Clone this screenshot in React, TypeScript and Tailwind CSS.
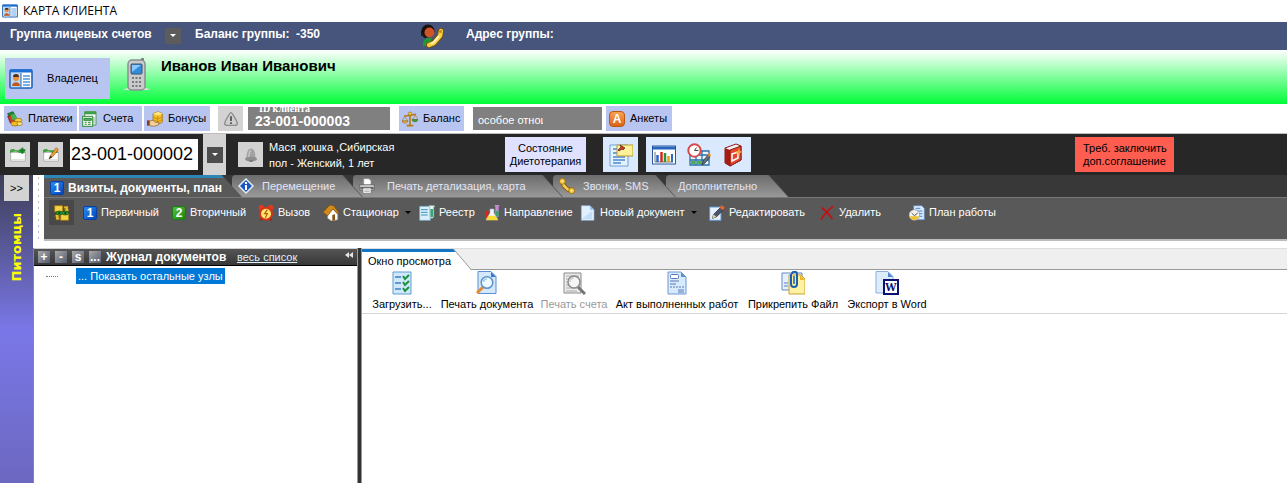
import type { ReactNode } from "react";

function Svg({ size = 16, label, children }: { size?: number; label?: string; children: ReactNode }) {
  return (
    <svg width={size} height={size} viewBox="0 0 24 24" className="shrink-0" aria-hidden={label ? undefined : true} role={label ? "img" : undefined} aria-label={label}>
      {children}
    </svg>
  );
}

const CardIcon = ({ size }: { size?: number }) => (
  <Svg size={size}>
    <rect x="1" y="3" width="22" height="18" rx="1" fill="#fff" stroke="#1f63b8" strokeWidth="1.6" />
    <rect x="1" y="2.500" width="22" height="3" fill="#1a6fd6" />
    <rect x="2" y="6" width="10" height="14" fill="#b9d7f6" />
    <circle cx="7" cy="11" r="3" fill="#e8913a" />
    <path d="M4 10a3 3 0 0 1 6 0z" fill="#5a2b10" />
    <path d="M3 19c0-5 8-5 8 0z" fill="#c4561d" />
    <path d="M12 6v14" stroke="#1f63b8" />
    <path d="M14 9h7M14 12h7M14 15h7M14 18h7" stroke="#4f94dc" strokeWidth="1.300" />
  </Svg>
);

const PhoneIcon = () => (
  <svg width="27" height="34" viewBox="0 0 27 34" className="shrink-0" aria-hidden="true">
    <path d="M0 32h27l-3-2H4z" fill="#d6dcd6" />
    <rect x="18" y="0" width="3" height="8" rx="1" fill="#777" />
    <rect x="5" y="2" width="17" height="30" rx="4" fill="#c9cbcc" stroke="#8b8f90" strokeWidth="1.500" />
    <rect x="8" y="6" width="11" height="10" rx="1" fill="#2f8de0" stroke="#3c5168" />
    <path d="M9 7h9l-9 7z" fill="#8cc8fa" />
    {[20, 24, 28].map((y) => [10, 13.5, 17].map((x) => <rect key={`${x}-${y}`} x={x - 1} y={y - 1} width="2" height="2" fill="#75797b" />))}
  </svg>
);

const OperatorIcon = () => (
  <Svg size={24}>
    <path d="M3 22c-1-7 4-9 9-8l-3 8z" fill="#20983a" />
    <circle cx="8" cy="7" r="6.500" fill="#16100e" />
    <circle cx="9.500" cy="8.500" r="5" fill="#cf5426" />
    <path d="M2 7v5M3 12l3 2" stroke="#111" strokeWidth="1.500" />
    <path d="M9 21l5-2 6-7 1-5" fill="none" stroke="#7b5200" strokeWidth="6" strokeLinecap="round" strokeLinejoin="round" />
    <path d="M9 21l5-2 6-7 1-5" fill="none" stroke="#f7cf4a" strokeWidth="4.200" strokeLinecap="round" strokeLinejoin="round" />
    <path d="M11 20l3-2 5-6" fill="none" stroke="#fff1b0" strokeWidth="2" />
    <circle cx="20.500" cy="7.500" r="1.500" fill="#c08a14" />
  </Svg>
);

const PayIcon = () => (
  <Svg>
    <path d="M1 4l8-3 5 9-8 4z" fill="#1c8a2b" stroke="#0c4d15" />
    <path d="M1 8l4 10 7-2-4-10z" fill="#c43b23" stroke="#6e1608" />
    <path d="M5 6l7-2 3 7-7 3z" fill="#49b04f" />
    <ellipse cx="17" cy="14" rx="5.500" ry="3" fill="#f7cf3d" stroke="#94660a" />
    <ellipse cx="12" cy="19" rx="6" ry="3.500" fill="#f3bb25" stroke="#94660a" />
    <ellipse cx="19" cy="19" rx="4" ry="2.800" fill="#ffe27a" stroke="#94660a" />
  </Svg>
);

const BillIcon = () => (
  <Svg>
    <path d="M4 1h17v20H4z" fill="#fff" stroke="#4d9a52" strokeWidth="1.500" />
    <path d="M4 1h17v4H4z" fill="#3f9f48" />
    <rect x="1" y="8" width="15" height="15" fill="#eef8ee" stroke="#338a3d" strokeWidth="1.500" />
    <path d="M3 11h11v3H3zM4 17h3M9 17h4M4 20h3M9 20h4" fill="#58b15f" stroke="#338a3d" strokeWidth="1.500" />
    <path d="M18 9v10" stroke="#81a985" strokeWidth="1.500" />
  </Svg>
);

const BonusIcon = () => (
  <Svg>
    <path d="M9 4l8-3 6 3v13l-7 3-7-3z" fill="#f6bd22" stroke="#98690c" />
    <path d="M9 4l7 3 7-3-6-3z" fill="#ffe783" />
    <path d="M16 7v13M9 9l7 3 7-3M9 13l7 3 7-3" stroke="#b77e0e" fill="none" />
    <path d="M0 14h4v8H0z" fill="#8b3d16" />
    <path d="M4 15l5-1 3 3h6l-1 4-7 2-6-1z" fill="#f2d3a2" stroke="#8a5a2a" />
  </Svg>
);

const WarnIcon = () => (
  <Svg>
    <path d="M12 2.500c2 0 9 13 9.500 16 0 2-1 3-3 3h-13c-2 0-3-1-3-3C3 15.500 10 2.500 12 2.500z" fill="#cfcfcf" stroke="#8b8b8b" strokeWidth="2" />
    <path d="M12 8v7M12 17v2.500" stroke="#4f4f4f" strokeWidth="2.600" />
  </Svg>
);

const ScalesIcon = () => (
  <Svg>
    <path d="M12 2v19M7 22h10M3 8l18-3" stroke="#b57b12" strokeWidth="2.400" />
    <circle cx="12" cy="4" r="2.500" fill="#f7cd48" stroke="#99680b" />
    <path d="M4 8l-4 7h9zM20 6l-4 7h8z" fill="none" stroke="#a9801f" />
    <path d="M0 15h9c-1 4-8 4-9 0z" fill="#f2c136" stroke="#99680b" />
    <path d="M15 13h9c-1 4-8 4-9 0z" fill="#4da63c" stroke="#2d6c22" />
  </Svg>
);

const LetterIcon = () => (
  <span aria-hidden="true" className="grid size-4 shrink-0 place-items-center rounded-sm border border-[#b85a14] bg-linear-to-b from-[#f9a052] to-[#dd6210] text-xs leading-3 font-bold text-white">A</span>
);

const FolderIcon = ({ edit = false }: { edit?: boolean }) => (
  <Svg>
    <path d="M1 8h22v13H1z" fill="#fff" stroke="#999" />
    <path d="M0 9V5c3-3 6-2 8 0h14v4H14c-4-3-8-3-14 0z" fill="#3ea33f" />
    <path d="M2 18h20v3H2z" fill="#e1e6dc" />
    {edit ? (
      <>
        <path d="M9 18l2-5L20 1l3 3-9 11z" fill="#f0a236" stroke="#9b4b12" />
        <path d="M9 18l2-5 3 2z" fill="#333" />
      </>
    ) : (
      <path d="M14 5h9M18.500 1v9" stroke="#177f25" strokeWidth="3" />
    )}
  </Svg>
);

const BellIcon = () => (
  <Svg>
    <path d="M5 17c1-3 0-7 2-11 2-5 8-5 10 0 2 4 1 8 2 11z" fill="#a2a2a2" />
    <path d="M9 15c0-5 0-9 3-10" stroke="#ccc" strokeWidth="2" fill="none" />
    <ellipse cx="12" cy="18" rx="9" ry="3.500" fill="#8e8e8e" />
    <ellipse cx="12" cy="21" rx="3" ry="1.500" fill="#777" />
  </Svg>
);

const NoteIcon = () => (
  <Svg size={24}>
    <path d="M1 2h18v21H1z" fill="#e6f3ff" stroke="#6ba0d6" />
    <path d="M4 6h5M4 10h6M4 14h12M4 17h12M4 20h8" stroke="#4789cf" strokeWidth="1.300" />
    <path d="M8 2h16v11H8z" fill="#fff19a" stroke="#b79a2e" />
    <path d="M9 7l3-3-1-2 5 3-2 2-1-1-3 2z" fill="#d2342a" stroke="#3a1010" strokeWidth=".6" />
  </Svg>
);

const ChartIcon = () => (
  <Svg size={24}>
    <rect x="0.500" y="3" width="23" height="18" fill="#fff" stroke="#2a58a0" />
    <path d="M1 3.500h22v3H1z" fill="#2865bd" />
    <path d="M3 9v10h18" stroke="#777" fill="none" />
    <path d="M5.500 19v-7" stroke="#2c68c8" strokeWidth="2.500" />
    <path d="M9.500 19V9" stroke="#cf2c20" strokeWidth="2.500" />
    <path d="M13 19v-9" stroke="#2d9436" strokeWidth="2.500" />
    <path d="M16.500 19v-6" stroke="#e5a021" strokeWidth="2.500" />
    <path d="M20 19v-8" stroke="#2c68c8" strokeWidth="2" />
  </Svg>
);

const ScheduleIcon = () => (
  <Svg size={24}>
    <path d="M3 8h19v14H3z" fill="#eaf5ff" stroke="#2a6fa8" strokeWidth="1.300" />
    <path d="M3 12h19M3 17h19M9 8v14M15 8v14" stroke="#2a6fa8" strokeWidth="1.300" />
    <path d="M4 18h4v3H4zM10 18h4v3h-4z" fill="#4caf4f" />
    <circle cx="7.500" cy="7.500" r="6.200" fill="#fff" stroke="#d9484b" strokeWidth="2" />
    <path d="M7.500 7.500h4M7.500 7.500l2-3" stroke="#444" fill="none" />
    <path d="M15 22l1-4 5-6 2 2-5 6z" fill="#687180" stroke="#333" strokeWidth=".8" />
    <path d="M20 12l2-2 2 2-1 2z" fill="#e48a28" />
  </Svg>
);

const BookIcon = () => (
  <Svg size={24}>
    <path d="M3 5l11-4 5 2v14L8 23l-5-3z" fill="#f3f3f3" stroke="#8d1b13" />
    <path d="M3 5l5 2v16l-5-3z" fill="#a51d12" />
    <path d="M8 7l11-4v14L8 23z" fill="#e4482f" stroke="#8d1b13" />
    <path d="M10 11l6-2v6l-6 3z" fill="none" stroke="#fff" strokeWidth="1.500" />
    <path d="M17 5l1 3 3 1-3 1-1 4-1-4-3-1 3-1z" fill="#f3a437" />
  </Svg>
);

function NumberIcon({ n, green = false }: { n: number; green?: boolean }) {
  return (
    <span aria-hidden="true" className={`grid size-[14px] shrink-0 place-items-center rounded-xs border text-xs leading-3 font-bold text-white ${green ? "border-[#1b7a1b] bg-linear-to-br from-[#55c13b] to-[#16840f]" : "border-[#0b3fa4] bg-linear-to-br from-[#2a8df2] to-[#0646bb]"}`}>
      {n}
    </span>
  );
}

const InfoIcon = () => (
  <Svg>
    <path d="M12 0l12 12-12 12L0 12z" fill="#e5eefb" />
    <path d="M12 3l9 9-9 9-9-9z" fill="#1c56c4" />
    <path d="M12 6v3M12 10.500V18" stroke="#fff" strokeWidth="3" />
  </Svg>
);

const PrinterIcon = () => (
  <Svg>
    <path d="M7 1h8l3 3v7H7z" fill="#fff" stroke="#8b8b8b" />
    <path d="M1 10h22v8H1z" fill="#c9c9c9" stroke="#555" />
    <path d="M2 14h20v2H2z" fill="#444" />
    <path d="M6 15h12v8H6z" fill="#fff" stroke="#777" />
    <path d="M8 18h8M8 20.500h8" stroke="#888" />
  </Svg>
);

const HandsetIcon = () => (
  <Svg>
    <path d="M5 5l2 6 6 6 6 2" fill="none" stroke="#8a5a04" strokeWidth="6.500" />
    <path d="M5 5l2 6 6 6 6 2" fill="none" stroke="#f8cf55" strokeWidth="4" />
    <circle cx="5" cy="5" r="4.500" fill="#f6c13d" stroke="#8a5a04" />
    <circle cx="19" cy="19" r="4.500" fill="#f6c13d" stroke="#8a5a04" />
    <circle cx="5" cy="5" r="1.500" fill="#fff4be" />
    <circle cx="19" cy="19" r="1.500" fill="#fff4be" />
  </Svg>
);

const LinkIcon = () => (
  <Svg>
    <path d="M1 1h12v9H1zM10 13h12v10H10z" fill="#f5d243" stroke="#a1770c" />
    <path d="M15 2h6v5h2l-4 4-4-4h2V5h-2zM8 22H3v-5H1l4-4 4 4H7v2h1z" fill="#f0c22f" stroke="#a1770c" strokeWidth=".7" />
    <ellipse cx="8" cy="12" rx="5" ry="3" fill="#2d9a2c" stroke="#0d4f13" />
    <ellipse cx="17" cy="12" rx="5" ry="3" fill="#2d9a2c" stroke="#0d4f13" />
    <circle cx="8" cy="12" r="1.500" fill="#082f0a" />
    <circle cx="17" cy="12" r="1.500" fill="#082f0a" />
  </Svg>
);

const AlarmIcon = () => (
  <Svg>
    <circle cx="5" cy="4" r="4" fill="#e23a1e" />
    <circle cx="19" cy="4" r="4" fill="#e23a1e" />
    <path d="M4 23l3-4M20 23l-3-4" stroke="#a31c0c" strokeWidth="3" />
    <circle cx="12" cy="13" r="9" fill="#ffe36b" stroke="#d5321a" strokeWidth="3" />
    <path d="M14 7l-4 6h4l-3 6" stroke="#b0600a" strokeWidth="1.800" fill="none" />
  </Svg>
);

const HouseIcon = () => (
  <Svg>
    <path d="M7 13l8-7 7 8v8l-9 2-6-4z" fill="#fff" stroke="#a39b8b" />
    <path d="M0 11L10 0l6 1 8 11-2 1-7-7-8 10z" fill="#d18a1b" stroke="#7b4a08" />
    <path d="M14 15l4-1v9l-4 1z" fill="#8a5110" />
  </Svg>
);

const RegistryIcon = () => (
  <Svg>
    <path d="M1 2h16v21H1z" fill="#d9f0fb" stroke="#70b1d6" />
    <path d="M3 7h10M3 11h10M3 15h10" stroke="#3f8fc2" strokeWidth="1.500" />
    <path d="M15 1h8v2h-1v14c0 4-6 4-6 0V3h-1z" fill="#e9f8f0" stroke="#9bb" />
    <path d="M17 6h4v11c0 2-4 2-4 0z" fill="#35a576" />
  </Svg>
);

const FlaskIcon = () => (
  <Svg>
    <path d="M1 9h6v9c0 4-5 4-5 0z" fill="#d22a1c" />
    <path d="M16 0h7v2h-1v14c0 3-5 3-5 0V2h-1z" fill="#c48bd1" />
    <path d="M18 9h4v7c0 2-4 2-4 0z" fill="#3aa06c" />
    <path d="M9 6h6v6l6 10H3l6-10z" fill="#f4f6fb" stroke="#9aa6bb" />
    <path d="M7 16h10l4 7H3z" fill="#f7dc34" />
  </Svg>
);

const PageIcon = () => (
  <Svg>
    <path d="M2 1h13l6 6v16H2z" fill="#e3f0ff" stroke="#8db5e2" />
    <path d="M15 1v6h6z" fill="#8cbdf0" />
    <path d="M4 20L18 9v12H4z" fill="#c4defa" />
  </Svg>
);

const EditIcon = () => (
  <Svg>
    <path d="M1 3h17v20H1z" fill="#e6f2ff" stroke="#5c93d1" strokeWidth="1.500" />
    <path d="M5 20l2-6L18 3l4 4-11 11z" fill="#4c566a" stroke="#1e2635" />
    <path d="M16 4l3-4 5 4-3 4z" fill="#e2632b" />
    <path d="M5 20l2-6 4 4z" fill="#f4cf94" />
  </Svg>
);

const DeleteIcon = () => (
  <Svg>
    <path d="M4 4c6 4 12 11 16 17M21 2C14 7 8 14 3 22" stroke="#c90d0d" strokeWidth="2.600" fill="none" />
  </Svg>
);

const PlanIcon = () => (
  <Svg>
    <path d="M7 1h12l4 4v17H7z" fill="#d9eaff" stroke="#5b8cc9" />
    <path d="M10 5h7M10 9h10M15 13h5M16 17h4" stroke="#4e86c9" strokeWidth="1.500" />
    <circle cx="8" cy="15" r="8" fill="#f2f2f2" stroke="#8e8e8e" />
    <path d="M1 17h14c-1 7-12 8-14 0z" fill="#f0c22c" />
    <path d="M4 12l4 4 5-4" stroke="#555" strokeWidth="1.500" fill="none" />
  </Svg>
);

const ChecklistIcon = () => (
  <Svg size={24}>
    <path d="M3 1h18v22H3z" fill="#cfe8fb" stroke="#5c9dd0" />
    <path d="M5 6h6M5 12h6M5 18h6" stroke="#3c7fc0" strokeWidth="1.300" />
    <path d="M13 5l2 3 4-4M13 11l2 3 4-4M13 17l2 3 4-4" stroke="#17913a" strokeWidth="2" fill="none" />
  </Svg>
);

function PreviewIcon({ gray = false }: { gray?: boolean }) {
  return gray ? (
    <Svg size={24}>
      <path d="M2 2h17v20H2z" fill="#ececec" stroke="#888" />
      <path d="M4 5h13M4 8h4M4 11h3M4 14h4M4 17h11M4 20h11" stroke="#aaa" />
      <path d="M16 16l7 7" stroke="#777" strokeWidth="3" />
      <circle cx="12" cy="11" r="6" fill="#f6f6f6" stroke="#8a8a8a" strokeWidth="1.500" />
      <path d="M8 11a4 4 0 0 1 4-4" stroke="#ccc" strokeWidth="1.500" fill="none" />
    </Svg>
  ) : (
    <Svg size={24}>
      <path d="M3 0.500h13l5 5V22.500H3z" fill="#d3e8fd" stroke="#5a8fd0" />
      <path d="M16 1v5h5z" fill="#3878c9" />
      <path d="M8 16l-6 6" stroke="#e38b2f" strokeWidth="3" />
      <circle cx="12" cy="11.500" r="5.800" fill="#eefaff" stroke="#5f93c8" strokeWidth="1.500" />
      <path d="M8.500 11a3.500 3.500 0 0 1 3.500-3" stroke="#9bd0f2" strokeWidth="1.500" fill="none" />
    </Svg>
  );
}

const ActIcon = () => (
  <Svg size={24}>
    <path d="M3 1h13l5 5v17H3z" fill="#d8eafd" stroke="#6b97d3" />
    <path d="M16 1v5h5z" fill="#5d90d3" />
    <rect x="5.500" y="3.500" width="8" height="4" rx="1" fill="#fff" stroke="#5b77b3" />
    <path d="M5 10h9M5 13h6M13 19h6M13 21h6" stroke="#5b77b3" />
    <path d="M5 16h14" stroke="#5b77b3" strokeDasharray="2 1" />
  </Svg>
);

const AttachIcon = () => (
  <Svg size={24}>
    <path d="M1 2h20v17H1z" fill="#e3f0fd" stroke="#6b86bd" />
    <path d="M3 12h4M3 15h4" stroke="#5d7fc4" />
    <path d="M8 4h12l4 4v15H8z" fill="#fdf2a2" stroke="#c9a02c" />
    <path d="M19 4v5h5z" fill="#edb62b" />
    <path d="M10 3v10c0 4 6 4 6 0V3c0-3-5-3-5 0" fill="none" stroke="#1c5fae" strokeWidth="2" />
    <path d="M13 5v8" stroke="#1c5fae" strokeWidth="1.500" />
  </Svg>
);

const WordIcon = () => (
  <span aria-hidden="true" className="relative">
    <Svg size={24}>
      <path d="M1 0.500h12l5 5V22H1z" fill="#dcecfd" stroke="#8db1dc" />
      <path d="M13 1v5h5z" fill="#4f8ad0" />
    </Svg>
    <span className="absolute right-0 bottom-0 grid size-4 place-items-center border-2 border-[#0a1172] bg-white font-serif text-xs leading-3 font-bold text-[#0a1172]">W</span>
  </span>
);

const Caret = () => (
  <svg width="6" height="4" viewBox="0 0 6 4" className="shrink-0" aria-hidden="true">
    <path d="M0 0h6L3 3z" fill="currentColor" />
  </svg>
);

const lightButton = "flex h-[25px] items-center gap-[5px] bg-[#b9c5f1] px-[3px]";
const squareButton = "grid size-[25px] shrink-0 place-items-center bg-[#d3d3d3]";

const tabs = [
  { title: "Визиты, документы, план", icon: <NumberIcon n={1} />, box: "z-50 w-[198px]", inner: "gap-1 pl-1.5" },
  { title: "Перемещение", icon: <InfoIcon />, box: "z-40 -ml-[10px] w-[131px]", inner: "gap-2 pl-1.5" },
  { title: "Печать детализация, карта", icon: <PrinterIcon />, box: "z-30 -ml-[10px] w-[210px]", inner: "gap-3 pl-1.5" },
  { title: "Звонки, SMS", icon: <HandsetIcon />, box: "z-20 -ml-[10px] w-[123px]", inner: "gap-2 pl-1.5" },
  { title: "Дополнительно", icon: null, box: "z-10 -ml-[10px] w-[123px]", inner: "pl-3" },
];

const actions = [
  { title: "Первичный", icon: <NumberIcon n={1} />, width: "w-[89px]" },
  { title: "Вторичный", icon: <NumberIcon n={2} green />, width: "w-[86px]" },
  { title: "Вызов", icon: <AlarmIcon />, width: "w-[65px]" },
  { title: "Стационар", icon: <HouseIcon />, width: "w-[96px]", menu: true },
  { title: "Реестр", icon: <RegistryIcon />, width: "w-[65px]" },
  { title: "Направление", icon: <FlaskIcon />, width: "w-[96px]" },
  { title: "Новый документ", icon: <PageIcon />, width: "w-[129px]", menu: true },
  { title: "Редактировать", icon: <EditIcon />, width: "w-[110px]" },
  { title: "Удалить", icon: <DeleteIcon />, width: "w-[90px]" },
  { title: "План работы", icon: <PlanIcon />, width: "w-[100px]" },
];

const viewerActions = [
  { title: "Загрузить...", icon: <ChecklistIcon />, width: "w-[68px]" },
  { title: "Печать документа", icon: <PreviewIcon />, width: "w-[94px]" },
  { title: "Печать счета", icon: <PreviewIcon gray />, width: "w-[72px]", disabled: true },
  { title: "Акт выполненных работ", icon: <ActIcon />, width: "w-[126px]" },
  { title: "Прикрепить Файл", icon: <AttachIcon />, width: "w-[98px]" },
  { title: "Экспорт в Word", icon: <WordIcon />, width: "w-[82px]" },
];

function GroupBar() {
  return (
    <div className="flex h-[28px] items-center bg-[#47547b] pb-1 pl-[10px] text-xs font-bold text-white">
      <span className="w-[155px]">Группа лицевых счетов</span>
      <button aria-label="Выбрать группу" className="mt-1 grid size-4 place-items-center bg-[#5c5c5c] text-white"><Caret /></button>
      <span className="ml-[14px] w-[101px]">Баланс группы:</span>
      <span className="w-[124px]">-350</span>
      <button aria-label="Позвонить" className="mt-1"><OperatorIcon /></button>
      <span className="ml-[22px]">Адрес группы:</span>
    </div>
  );
}

function OwnerBar() {
  return (
    <div className="flex h-[54px] items-start bg-linear-to-b/srgb from-white to-[#00fc38] pt-2 pl-[5px]">
      <button className="flex h-[41px] w-[105px] items-center gap-[14px] bg-[#b9c5f1] pl-1 text-[11px]">
        <CardIcon size={24} />
        Владелец
      </button>
      <div className="ml-[13px]"><PhoneIcon /></div>
      <h1 className="ml-[11px] text-[15px] leading-4 font-bold">Иванов Иван Иванович</h1>
    </div>
  );
}

function ClientBar() {
  return (
    <div className="flex h-[30px] items-start border-b border-[#bdbdbd] pt-0.5 pl-1 text-[11px]">
      <div className="flex gap-0.5">
        <button className={`${lightButton} w-[73px]`}><PayIcon />Платежи</button>
        <button className={`${lightButton} w-[63px]`}><BillIcon />Счета</button>
        <button className={`${lightButton} w-[66px]`}><BonusIcon />Бонусы</button>
      </div>
      <button aria-label="Предупреждения" className={`${squareButton} ml-2`}><WarnIcon /></button>
      <div className="mt-px ml-[5px] flex h-[23px] w-[142px] flex-col bg-[#808080] pl-[7px] text-white">
        <label htmlFor="client-id" className="flex h-1.5 items-end pl-1 font-['Liberation_Serif',serif] text-[10px] leading-[9px] font-bold">ID клиента</label>
        <input id="client-id" readOnly defaultValue="23-001-000003" className="h-4 w-full bg-transparent text-sm leading-4 font-bold outline-none" />
      </div>
      <button className={`${lightButton} ml-[9px] w-[65px]`}><ScalesIcon />Баланс</button>
      <div className="mt-px ml-[9px] h-[23px] w-[129px] bg-[#808080] pl-[5px] text-white">
        <input aria-label="Особое отношение" readOnly defaultValue="особое отношение" className="h-[25px] w-[65px] bg-transparent text-[11px] outline-none" />
      </div>
      <button className={`${lightButton} ml-1 w-[66px]`}><LetterIcon />Анкеты</button>
    </div>
  );
}

function PetBar() {
  return (
    <div className="flex h-[41px] items-center bg-[#272727] pl-[5px] text-[11px]">
      <button aria-label="Добавить карту" className={squareButton}><FolderIcon /></button>
      <button aria-label="Изменить карту" className={`${squareButton} ml-2`}><FolderIcon edit /></button>
      <input aria-label="Номер питомца" defaultValue="23-001-000002" className="ml-[7px] h-[31px] w-[128px] bg-white pl-px text-lg outline-none" />
      <div className="ml-[5px] flex h-[41px] w-[23px] items-center justify-center bg-[#d3d3d3]">
        <button aria-label="Выбрать питомца" className="grid size-4 place-items-center bg-[#4d4d4d] text-white"><Caret /></button>
      </div>
      <button aria-label="Напоминания" className={`${squareButton} ml-3`}><BellIcon /></button>
      <p className="ml-1.5 w-[236px] leading-4 text-white">Мася ,кошка ,Сибирская<br />пол - Женский, 1 лет</p>
      <button className="h-[35px] w-[81px] bg-[#e0e0ff] leading-[13px]">Состояние Диетотерапия</button>
      <button aria-label="Заметки" className="ml-[17px] grid h-[35px] w-[35px] place-items-center bg-[#dbe9ff]"><NoteIcon /></button>
      <div className="ml-2 flex h-[35px] w-[105px] items-center justify-around bg-[#dbe9ff]">
        <button aria-label="Графики"><ChartIcon /></button>
        <button aria-label="Расписание"><ScheduleIcon /></button>
        <button aria-label="Справочник"><BookIcon /></button>
      </div>
      <button className="ml-[324px] h-[35px] w-[99px] bg-[#ff5d50] pl-2 text-left leading-[13px] whitespace-nowrap">Треб. заключить<br />доп.соглашение</button>
    </div>
  );
}

function Ribbon() {
  return (
    <div className="flex h-[66px]">
      <div className="w-[11px] bg-[radial-gradient(circle,#b9b9c4_1px,transparent_1px)] bg-[length:11px_6px]" />
      <div className="min-w-0 flex-1 border-b-2 border-[#bcbcbc] bg-[#595959] text-[11px]">
        <div role="tablist" className="flex h-[22px] bg-[#383838]">
          {tabs.map((tab, i) => (
            <button key={tab.title} role="tab" aria-selected={i === 0} className={`relative shrink-0 pr-px [clip-path:polygon(0_0,calc(100%-20px)_0,100%_100%,0_100%)] ${tab.box} ${i === 0 ? "bg-[#595959]" : "rounded-tl bg-[#555]"}`}>
              <span className={`flex h-full items-center [clip-path:polygon(0_0,calc(100%-20px)_0,100%_100%,0_100%)] ${tab.inner} ${i === 0 ? "border-t-3 border-[#2d86b4] bg-[#595959] text-xs font-bold text-white" : "rounded-tl bg-linear-to-b from-[#6c6c6c] to-[#999] text-[#e4e4f4]"}`}>
                {tab.icon}
                {tab.title}
              </span>
            </button>
          ))}
        </div>
        <div className="flex items-center border-t border-[#777] pt-0.5 pl-[5px] text-white">
          <button aria-label="Связи" className="mr-[9px] grid size-[25px] shrink-0 place-items-center bg-[#484848]"><LinkIcon /></button>
          {actions.map((item) => (
            <button key={item.title} className={`flex h-[25px] shrink-0 items-center gap-1 whitespace-nowrap ${item.width}`}>
              {item.icon}
              {item.title}
              {item.menu && <span className="ml-0.5 text-black"><Caret /></span>}
            </button>
          ))}
        </div>
      </div>
    </div>
  );
}

function JournalPanel() {
  const mini = "grid h-3 w-3 place-items-center bg-linear-to-br from-[#aaa] to-[#555d70] text-xs leading-3 font-bold text-white";
  return (
    <section className="flex w-[324px] shrink-0 flex-col border-l border-[#888]">
      <header className="flex h-[18px] items-center border-t border-b border-t-[#d0d0d0] border-b-black bg-linear-to-b from-[#555] to-[#383838] pl-1 text-xs text-white">
        <div className="flex gap-[5px]">
          <button aria-label="Развернуть" className={mini}>+</button>
          <button aria-label="Свернуть" className={mini}>-</button>
          <button aria-label="Сортировка" className={`${mini} bg-[#aaa]`}>s</button>
          <button aria-label="Ещё" className={mini}>...</button>
        </div>
        <h2 className="ml-[5px] w-[131px] font-bold whitespace-nowrap">Журнал документов</h2>
        <a href="#all" className="text-[11px] text-[#dff0ff] underline">весь список</a>
        <button aria-label="Скрыть панель" className="mr-1 mb-1 ml-auto">
          <svg width="8" height="6" viewBox="0 0 8 6" aria-hidden="true"><path d="M4 0v6L0 3zM8 0v6L4 3z" fill="#e5e5e5" /></svg>
        </button>
      </header>
      <ul className="pt-0.5 text-[11px] leading-4">
        <li className="flex items-center gap-[18px] pl-3">
          <span className="w-3 border-t border-dotted border-[#777]" />
          <a href="#rest" className="bg-[#0078d7] px-0.5 whitespace-nowrap text-white">... Показать остальные узлы</a>
        </li>
      </ul>
    </section>
  );
}

function ViewerPanel() {
  return (
    <section className="min-w-0 flex-1 border-t border-[#ddd]">
      <div role="tablist" className="flex h-[21px] border-b border-[#999] bg-[#efefef] text-[11px]">
        <button role="tab" aria-selected="true" className="-mb-px w-[110px] bg-[#999] pr-px [clip-path:polygon(0_0,calc(100%-18px)_0,100%_100%,0_100%)]">
          <span className="flex h-full items-center border-t-3 border-[#1475c4] bg-white pl-1.5 whitespace-nowrap [clip-path:polygon(0_0,calc(100%-18px)_0,100%_100%,0_100%)]">Окно просмотра</span>
        </button>
      </div>
      <div className="flex gap-1 border-b border-[#d5d5d5] pt-px pb-px pl-1.5 text-[11px] leading-4">
        {viewerActions.map((item) => (
          <button key={item.title} disabled={item.disabled} className={`flex shrink-0 flex-col items-center gap-px whitespace-nowrap disabled:text-[#999] ${item.width}`}>
            {item.icon}
            {item.title}
          </button>
        ))}
      </div>
    </section>
  );
}

export default function App() {
  return (
    <div className="flex min-h-screen flex-col overflow-x-hidden bg-white font-['Liberation_Sans',Arial,sans-serif] text-black">
      <header className="flex h-[22px] items-center gap-[5px] pl-0.5 font-['Open_Sans',sans-serif] text-xs">
        <CardIcon />
        КАРТА КЛИЕНТА
      </header>
      <GroupBar />
      <OwnerBar />
      <ClientBar />
      <PetBar />
      <div className="flex flex-1">
        <aside className="flex w-[33px] shrink-0 flex-col items-center bg-linear-to-b from-[#3e3e58] via-[#7a77e8] to-[#6c68c0]">
          <button className="h-[26px] w-[25px] bg-[#d3d3d3] text-[11px]">&gt;&gt;</button>
          <span className="mt-3 rotate-180 font-['DejaVu_Sans',sans-serif] text-[13px] font-bold text-[#ff0] [writing-mode:vertical-rl]">Питомцы</span>
        </aside>
        <div className="flex min-w-0 flex-1 flex-col">
          <Ribbon />
          <div className="mt-[7px] flex flex-1">
            <JournalPanel />
            <div className="w-[5px] shrink-0 border-x border-[#999] bg-[#333]" />
            <ViewerPanel />
          </div>
        </div>
      </div>
    </div>
  );
}
